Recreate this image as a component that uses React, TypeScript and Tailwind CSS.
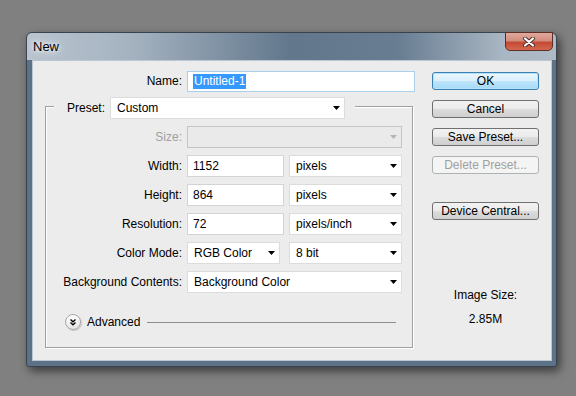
import React from "react";

const Arrow = ({ disabled = false }: { disabled?: boolean }) => (
  <svg width="7" height="4" viewBox="0 0 7 4" className="shrink-0">
    <path d="M0 0h7L3.5 4z" fill={disabled ? "#b4b4b4" : "#000"} />
  </svg>
);

const Select = ({
  value,
  w,
  disabled = false,
}: {
  value: string;
  w: string;
  disabled?: boolean;
}) => (
  <div
    className={`${w} h-[22px] flex items-center justify-between pl-[6px] pr-[4px] border ${
      disabled ? "bg-[#eaeaea] border-[#c4c4c4]" : "bg-white border-[#dcdcdc]"
    }`}
  >
    <span>{value}</span>
    <Arrow disabled={disabled} />
  </div>
);

const Field = ({ value, w }: { value: string; w: string }) => (
  <div className={`${w} h-[22px] flex items-center pl-[5px] bg-white border border-[#d4d4d4]`}>{value}</div>
);

const Button = ({
  label,
  variant = "normal",
}: {
  label: string;
  variant?: "normal" | "default" | "disabled";
}) => {
  const styles = {
    normal:
      "border-[#707070] bg-[linear-gradient(#f2f2f2,#ebebeb_50%,#dddddd_50%,#cfcfcf)] text-black",
    default:
      "border-[#3c7fb1] bg-[linear-gradient(#eaf6fd,#d9f0fc_50%,#bee6fd_50%,#a7d9f5)] text-black shadow-[inset_0_0_0_1px_#b5e2fa]",
    disabled: "border-[#adb2b5] bg-[#f4f4f4] text-[#a0a0a0]",
  }[variant];
  return (
    <div className={`h-[18px] rounded-[3px] border flex items-center justify-center ${styles}`}>
      {label}
    </div>
  );
};

const Row = ({ label, children, muted = false }: { label: string; children: React.ReactNode; muted?: boolean }) => (
  <div className="flex items-center h-[22px]">
    <div className={`w-[136px] text-right ${muted ? "text-[#a0a0a0]" : ""}`}>{label}</div>
    <div className="ml-[5px] flex gap-[5px]">{children}</div>
  </div>
);

export default function App() {
  return (
    <div className="w-[576px] h-[396px] bg-[#808080] pt-[32px] pl-[26px] font-['Liberation_Sans',Arial,sans-serif] text-[12px] leading-[15px] text-black">
      <div className="w-[531px] h-[335px] flex flex-col rounded-t-[6px] rounded-b-[3px] border border-[#38434e] bg-[#5e7287] shadow-[3px_4px_10px_rgba(0,0,0,0.55)]">
        {/* Title bar */}
        <div className="h-[27px] flex justify-between rounded-t-[5px] bg-[linear-gradient(90deg,#b9c4cf,#a4b2c0_20%,#62778c_50%,#687d92_70%,#a9b6c3_90%,#aebac6)]">
          <span className="pl-[6px] pt-[6px] text-[13px] [text-shadow:0_0_8px_#fff,0_0_4px_#fff]">New</span>
          <div className="-mt-px mr-[3px] w-[48px] h-[19px] rounded-b-[5px] border border-[#5a2f28] bg-[linear-gradient(#dfa99c,#d38d7e_45%,#c44a36_55%,#d4674c)] flex items-center justify-center">
            <svg width="14" height="10" viewBox="0 0 14 10">
              <path d="M3 1.5l8 7M11 1.5l-8 7" stroke="#4a2c28" strokeWidth="4" strokeLinecap="round" />
              <path d="M3 1.5l8 7M11 1.5l-8 7" stroke="#fff" strokeWidth="2.2" strokeLinecap="round" />
            </svg>
          </div>
        </div>

        {/* Client area */}
        <div className="flex-1 ml-[5px] mr-[4px] mb-[5px] border border-[#bac6d2] bg-[#ececec] flex pl-[12px]">
          {/* Left part */}
          <div className="w-[370px] pt-[10px] flex flex-col">
            <div className="flex items-center h-[21px]">
              <div className="w-[137px] text-right">Name:</div>
              <div className="ml-[5px] w-[228px] h-[21px] flex items-center pl-[5px] bg-white border border-[#a9cfea]">
                <span className="bg-[#3399ff] text-white px-px">Untitled-1</span>
              </div>
            </div>

            {/* Preset group */}
            <div className="relative mt-[14px] w-[368px] h-[242px] border border-[#a0a0a0] shadow-[inset_1px_1px_0_#fff,1px_1px_0_#fff] flex flex-col pt-[19px]">
              <div className="absolute left-[8px] top-[-10px] flex items-center bg-[#ececec] pl-[13px] pr-[10px]">
                <span>Preset:</span>
                <div className="ml-[5px]">
                  <Select value="Custom" w="w-[235px]" />
                </div>
              </div>

              <div className="flex flex-col gap-[7px]">
                <Row label="Size:" muted>
                  <Select value="" w="w-[215px]" disabled />
                </Row>
                <Row label="Width:">
                  <Field value="1152" w="w-[97px]" />
                  <Select value="pixels" w="w-[113px]" />
                </Row>
                <Row label="Height:">
                  <Field value="864" w="w-[97px]" />
                  <Select value="pixels" w="w-[113px]" />
                </Row>
                <Row label="Resolution:">
                  <Field value="72" w="w-[97px]" />
                  <Select value="pixels/inch" w="w-[113px]" />
                </Row>
                <Row label="Color Mode:">
                  <Select value="RGB Color" w="w-[93px]" />
                  <div className="ml-[4px]">
                    <Select value="8 bit" w="w-[113px]" />
                  </div>
                </Row>
                <Row label="Background Contents:">
                  <Select value="Background Color" w="w-[215px]" />
                </Row>
              </div>

              <div className="mt-[21px] flex items-center h-[16px] pl-[19px] pr-[16px]">
                <div className="w-[16px] h-[16px] rounded-full border border-[#a8a8a8] bg-[linear-gradient(#ffffff,#e4e4e4)] shadow-[1px_1px_1px_rgba(0,0,0,0.15)] flex items-center justify-center">
                  <svg width="8" height="8" viewBox="0 0 8 8">
                    <path d="M1.5 1.5L4 3.8 6.5 1.5M1.5 4.5L4 6.8 6.5 4.5" stroke="#000" strokeWidth="1.3" fill="none" />
                  </svg>
                </div>
                <span className="ml-[6px]">Advanced</span>
                <div className="ml-[7px] flex-1 h-px bg-[#8e8e8e]" />
              </div>
            </div>
          </div>

          {/* Right column */}
          <div className="ml-[17px] w-[107px] pt-[11px] flex flex-col">
            <div className="flex flex-col gap-[10px]">
              <Button label="OK" variant="default" />
              <Button label="Cancel" />
              <Button label="Save Preset..." />
              <Button label="Delete Preset..." variant="disabled" />
            </div>
            <div className="mt-[28px]">
              <Button label="Device Central..." />
            </div>
            <div className="mt-[68px] text-center">Image Size:</div>
            <div className="mt-[9px] text-center">2.85M</div>
          </div>
        </div>
      </div>
    </div>
  );
}
